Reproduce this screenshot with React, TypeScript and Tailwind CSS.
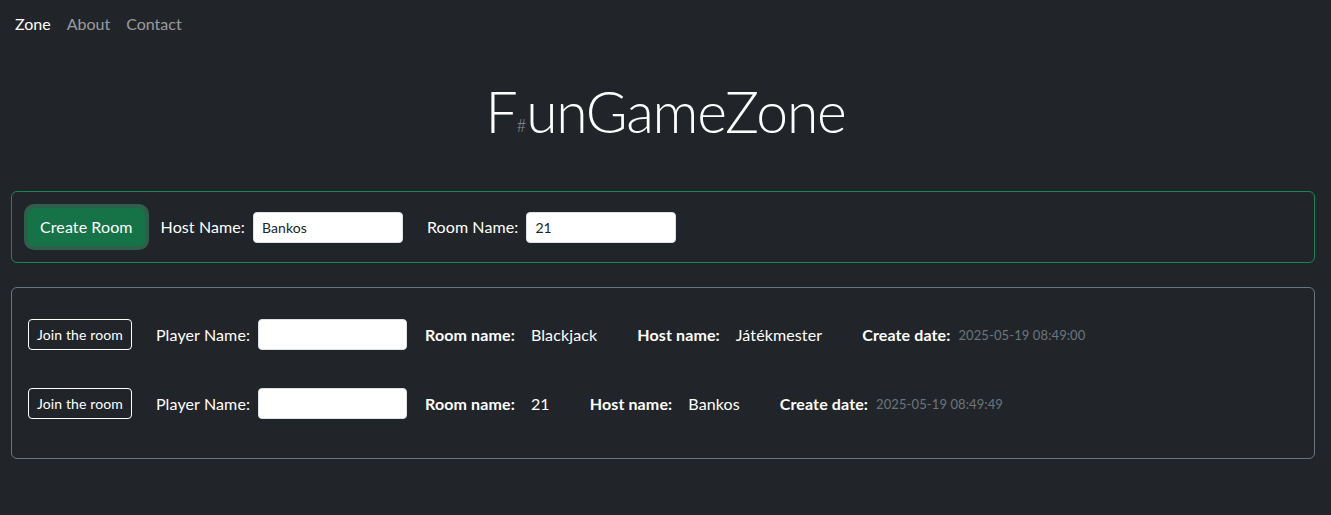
const rooms = [
  { room: "Blackjack", host: "Játékmester", date: "2025-05-19 08:49:00" },
  { room: "21", host: "Bankos", date: "2025-05-19 08:49:49" },
];

function RoomRow({ room, host, date }: { room: string; host: string; date: string }) {
  return (
    <div className="flex items-center py-[15px] mb-2 tracking-[0.12px]">
      <button className="h-[31px] px-2 text-sm text-white border border-white rounded-[4px] leading-none">
        Join the room
      </button>
      <label className="ml-6 text-base text-white">Player Name:</label>
      <input
        type="text"
        className="ml-2 w-[149px] h-[31px] px-2 text-sm text-[#212529] bg-white border border-[#dee2e6] rounded-[4px] outline-none"
      />
      <span className="ml-[18px] font-bold text-white">Room name:</span>
      <span className="ml-4 text-white">{room}</span>
      <span className="ml-10 font-bold text-white">Host name:</span>
      <span className="ml-4 text-white">{host}</span>
      <span className="ml-10 font-bold text-white">Create date:</span>
      <span className="ml-2 text-[13px] text-[#6c757d] tracking-[0.1px]">{date}</span>
    </div>
  );
}

export default function App() {
  return (
    <div className="min-h-[515px] bg-[#212529] text-white font-['Lato','Open_Sans',sans-serif] text-base leading-6">
      <nav className="flex pl-[7px] pt-1">
        <a className="px-2 py-2 text-white">Zone</a>
        <a className="px-2 py-2 text-[rgba(255,255,255,0.55)]">About</a>
        <a className="px-2 py-2 text-[rgba(255,255,255,0.55)]">Contact</a>
      </nav>

      <h1 className="mt-[33px] text-center text-[57px] leading-[1.2] font-light text-white tracking-[-1.2px]">
        F<sub className="text-[17px] text-[#8a9099] align-baseline relative top-[-1px] tracking-normal">#</sub>unGameZone
      </h1>

      <div className="pl-[11px] pr-[16px]">
        <div className="mt-[46px] flex items-center p-4 border border-[#198754] rounded-md tracking-[0.1px]">
          <button className="h-[38px] px-3 bg-[#157347] text-white rounded-md shadow-[0_0_0_4px_rgba(60,153,110,0.5)]">
            Create Room
          </button>
          <label className="ml-4">Host Name:</label>
          <input
            type="text"
            defaultValue="Bankos"
            className="ml-2 w-[150px] h-[31px] px-2 text-sm text-[#212529] bg-white border border-[#dee2e6] rounded-[4px] outline-none"
          />
          <label className="ml-6">Room Name:</label>
          <input
            type="text"
            defaultValue="21"
            className="ml-2 w-[150px] h-[31px] px-2 text-sm text-[#212529] bg-white border border-[#dee2e6] rounded-[4px] outline-none"
          />
        </div>

        <div className="mt-6 p-4 border border-[#6c757d] rounded-md">
          {rooms.map((r) => (
            <RoomRow key={r.room} {...r} />
          ))}
        </div>
      </div>
    </div>
  );
}
